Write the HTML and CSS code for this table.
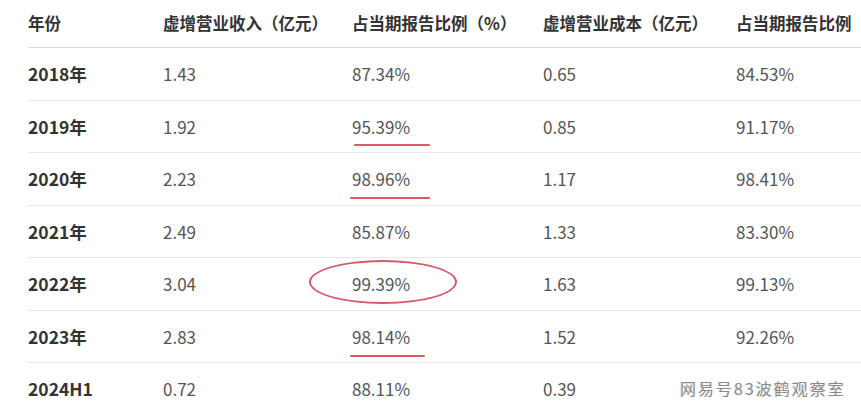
FILE: index.html
```html
<!DOCTYPE html>
<html lang="zh">
<head>
<meta charset="utf-8">
<link rel="stylesheet" href="styles.css">
</head>
<body>
<div class="page">
  <table class="data">
    <colgroup>
      <col class="c1"><col class="c2"><col class="c3"><col class="c4"><col class="c5">
    </colgroup>
    <thead>
      <tr><th>年份</th><th>虚增营业收入（亿元）</th><th>占当期报告比例（%）</th><th>虚增营业成本（亿元）</th><th>占当期报告比例</th></tr>
    </thead>
    <tbody>
      <tr><td class="yr">2018年</td><td>1.43</td><td>87.34%</td><td>0.65</td><td>84.53%</td></tr>
      <tr><td class="yr">2019年</td><td>1.92</td><td><span class="mark ul ul1">95.39%</span></td><td>0.85</td><td>91.17%</td></tr>
      <tr><td class="yr">2020年</td><td>2.23</td><td><span class="mark ul ul2">98.96%</span></td><td>1.17</td><td>98.41%</td></tr>
      <tr><td class="yr">2021年</td><td>2.49</td><td>85.87%</td><td>1.33</td><td>83.30%</td></tr>
      <tr><td class="yr">2022年</td><td>3.04</td><td><span class="mark circ">99.39%</span></td><td>1.63</td><td>99.13%</td></tr>
      <tr><td class="yr">2023年</td><td>2.83</td><td><span class="mark ul ul3">98.14%</span></td><td>1.52</td><td>92.26%</td></tr>
      <tr><td class="yr">2024H1</td><td>0.72</td><td>88.11%</td><td>0.39</td><td></td></tr>
    </tbody>
  </table>
  <div class="wm">网易号83波鹤观察室</div>
</div>
</body>
</html>
```
FILE: styles.css
```css
html, body { margin: 0; padding: 0; background: #fff; }
body { font-family: "Noto Sans CJK SC", "Noto Sans", sans-serif; overflow: hidden; }
.page { position: relative; width: 861px; height: 410px; overflow: hidden; padding-left: 28px; box-sizing: border-box; }
.data { border-collapse: collapse; table-layout: fixed; width: 900px; }
.c1 { width: 135px; } .c2 { width: 189px; } .c3 { width: 191px; } .c4 { width: 193px; } .c5 { width: 192px; }
.data th { text-align: left; font-weight: 700; font-size: 16.5px; color: #333; height: 46px; padding: 0; border-bottom: 1px solid #dcdcdc; vertical-align: middle; white-space: nowrap; padding-bottom: 1px; }
.data td { font-size: 17px; color: #555; height: 51.5px; padding: 0; border-bottom: 1px solid #e8e8e8; vertical-align: middle; white-space: nowrap; font-weight: 400; }
.data td.yr { font-weight: 700; color: #333; font-size: 17.5px; }
.mark { position: relative; display: inline-block; }
.ul::after { content: ""; position: absolute; height: 2px; background: #d9596b; border-radius: 1px; }
.ul1::after { left: 2px; right: -20px; bottom: -7px; }
.ul2::after { left: -2px; right: -20px; bottom: -8px; }
.ul3::after { left: -2px; right: -15px; bottom: -8px; }
.circ::after { content: ""; position: absolute; left: -43px; top: -11px; width: 144px; height: 40px; border: 2px solid #d45a6a; border-radius: 50%; }
.wm { position: absolute; left: 680px; top: 376px; font-size: 16px; color: #8a8a8a; letter-spacing: 2px; text-shadow: 1px 1px 0 #fff, -1px 0 0 #ddd; }
```
